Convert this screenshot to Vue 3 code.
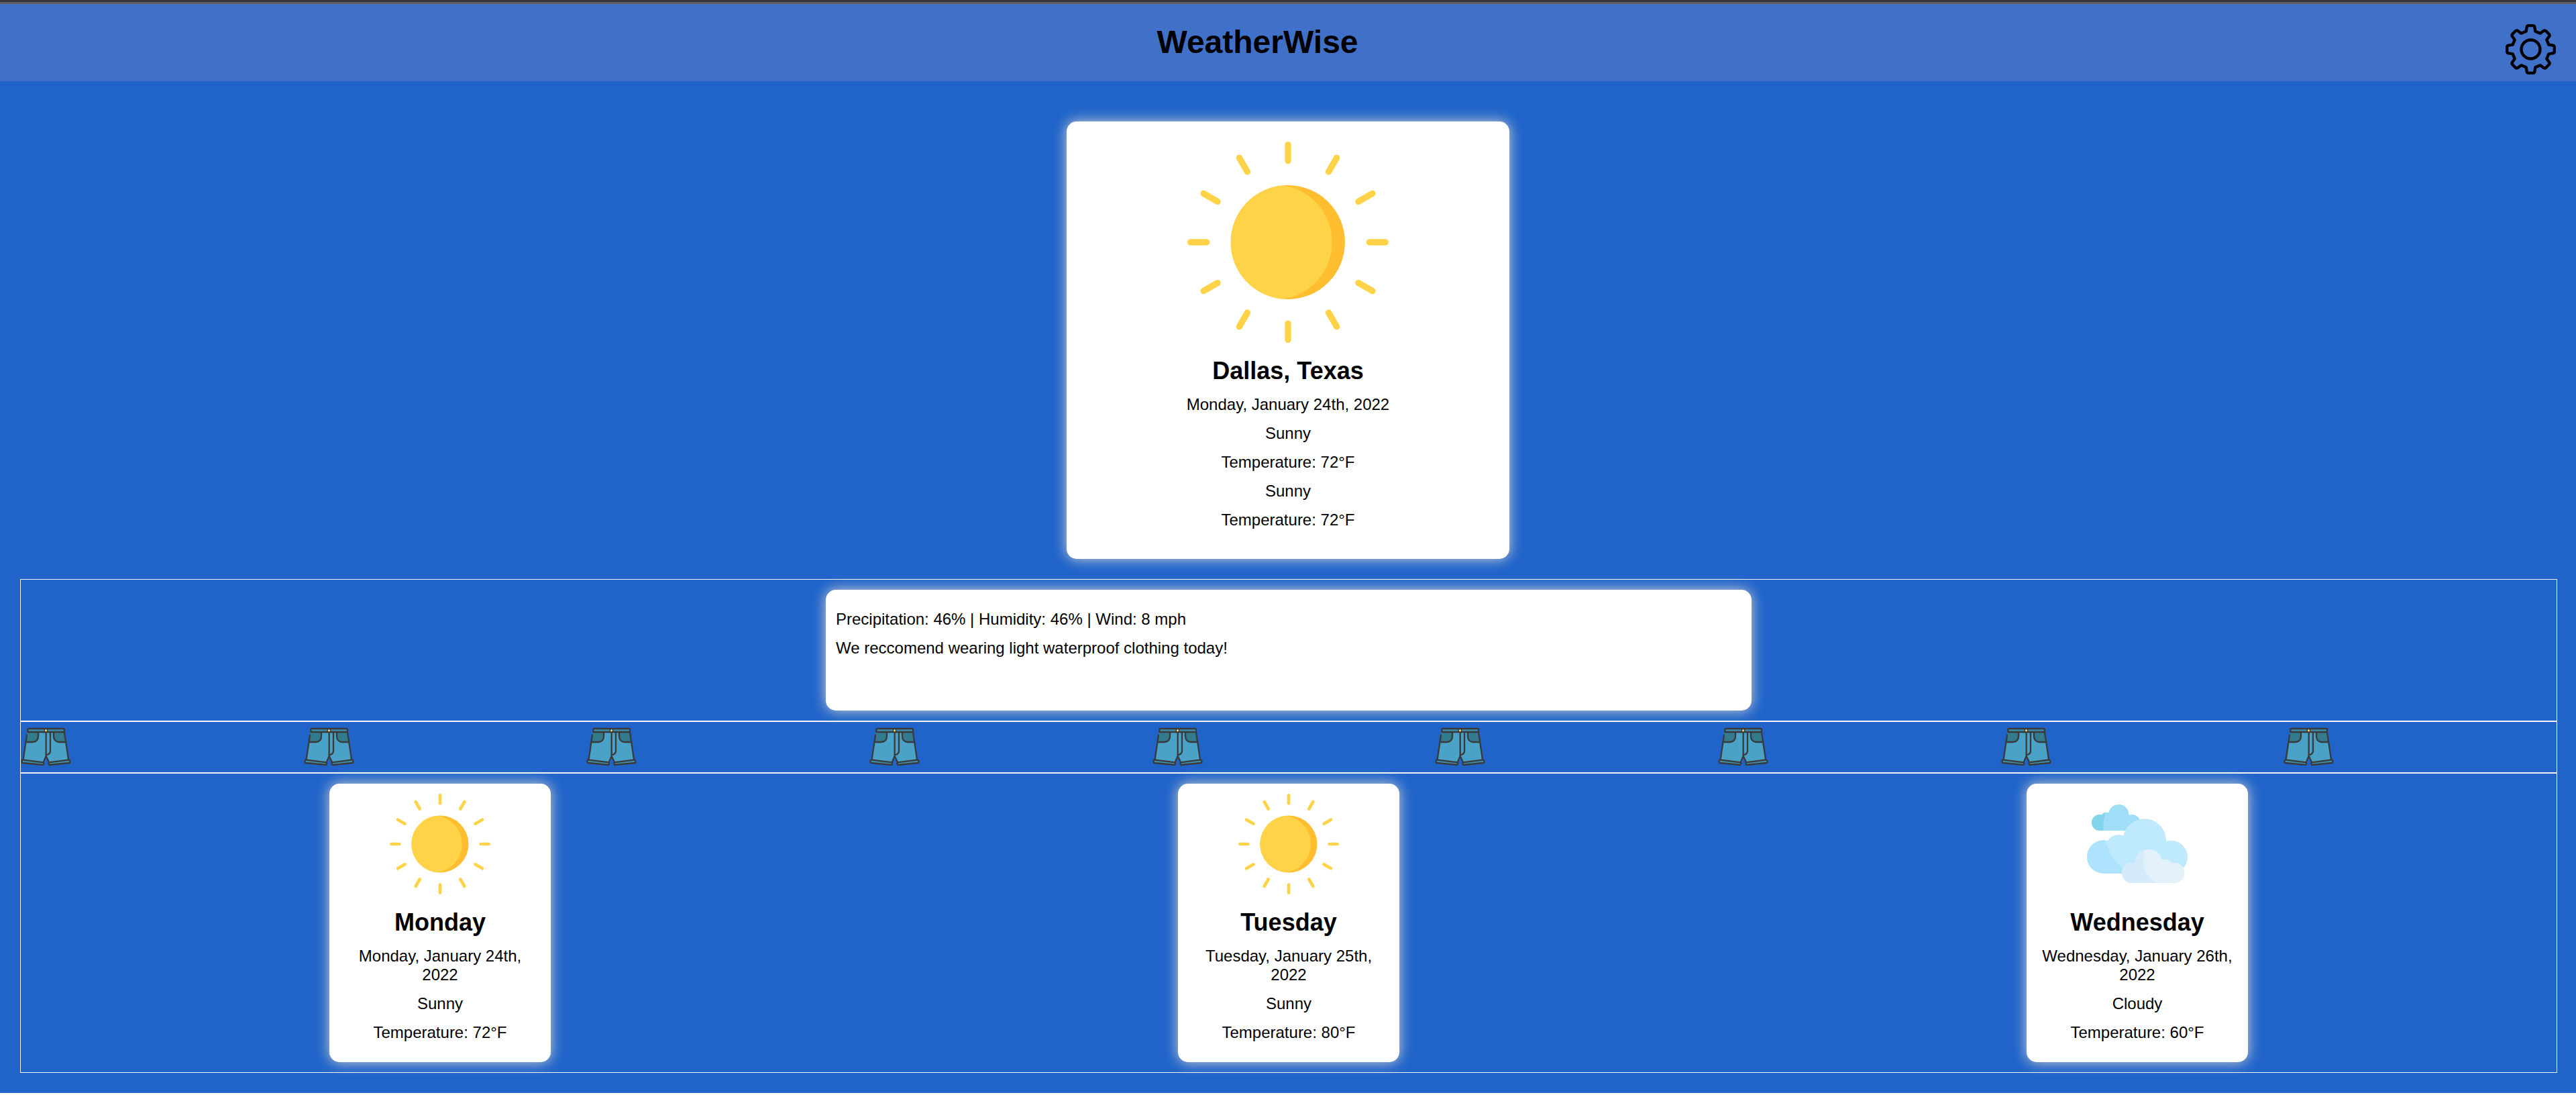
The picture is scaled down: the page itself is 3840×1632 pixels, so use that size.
<script setup>
const today = {
  place: 'Dallas, Texas',
  date: 'Monday, January 24th, 2022',
  readings: ['Sunny', 'Temperature: 72°F', 'Sunny', 'Temperature: 72°F'],
}

const details = [
  'Precipitation: 46% | Humidity: 46% | Wind: 8 mph',
  'We reccomend wearing light waterproof clothing today!',
]

const forecast = [
  { day: 'Monday', date: 'Monday, January 24th, 2022', sky: 'Sunny', temp: 72 },
  { day: 'Tuesday', date: 'Tuesday, January 25th, 2022', sky: 'Sunny', temp: 80 },
  { day: 'Wednesday', date: 'Wednesday, January 26th, 2022', sky: 'Cloudy', temp: 60 },
]
</script>

<template>
  <svg class="defs" width="0" height="0" aria-hidden="true">
    <symbol id="sun" viewBox="0 0 512 512">
      <g stroke="#ffd347" stroke-width="16" stroke-linecap="round">
        <path
          v-for="n in 12"
          :key="n"
          d="M256 8V49"
          :transform="`rotate(${n * 30} 256 256)`"
        />
      </g>
      <circle cx="256" cy="256" r="145" fill="#ffbd30" />
      <path d="M243 111.500A145 145 0 0 0 243 400.500A146 146 0 0 0 243 111.500Z" fill="#ffd347" />
    </symbol>

    <clipPath id="back-cloud">
      <circle cx="57" cy="129" r="36" />
      <circle cx="87" cy="107" r="24" />
      <circle cx="142" cy="94" r="46" />
      <circle cx="202" cy="129" r="36" />
      <rect x="57" y="100" width="145" height="65" />
    </clipPath>
    <clipPath id="big-cloud">
      <circle cx="74" cy="282" r="74" />
      <circle cx="141" cy="241" r="57" />
      <circle cx="257" cy="209" r="97" />
      <circle cx="376" cy="283" r="74" />
      <rect x="74" y="250" width="302" height="106" />
    </clipPath>
    <clipPath id="front-cloud">
      <circle cx="202" cy="354" r="46" />
      <circle cx="276" cy="309" r="61" />
      <circle cx="348" cy="332" r="38" />
      <circle cx="391" cy="354" r="46" />
      <rect x="202" y="330" width="189" height="70" />
    </clipPath>
    <symbol id="clouds" viewBox="0 0 450 450">
      <g clip-path="url(#back-cloud)">
        <path d="M0 0H450V450H0Z" fill="#9fdef6" />
        <path d="M0 70H88Q72 110 72 170H0Z" fill="#84d4ec" />
      </g>
      <g clip-path="url(#big-cloud)">
        <path d="M0 0H450V450H0Z" fill="#bfe9fc" />
        <path d="M0 200H80C92 255 120 305 190 360H0Z" fill="#aee3ff" />
      </g>
      <g clip-path="url(#front-cloud)">
        <path d="M0 0H450V450H0Z" fill="#e3f2fa" />
        <path d="M150 240H264C236 305 260 375 318 402H150Z" fill="#d6ebfa" />
      </g>
    </symbol>

    <symbol id="shorts" viewBox="0 0 225 225">
      <path d="M30 45H193L213 172L126 183L113 152L99 183L10 172Z" fill="#4aa3c7" />
      <path d="M28 45H78V68Q76 89 57 90H23Z" fill="#327a8c" />
      <path d="M147 45H195L202 90H168Q148 88 147 68Z" fill="#327a8c" />
      <g stroke="#3a3a3c" stroke-width="7" stroke-linejoin="round" stroke-linecap="round">
        <path d="M34 30H191Q195 30 195 34V45H31V33Q31 30 34 30Z" fill="#3d8fa8" />
        <path d="M8 169L102 181Q103 191 99 192L6 183Q2 176 8 169Z" fill="#3d8fa8" />
        <path d="M216 169L125 181Q123 191 128 192L219 183Q223 176 216 169Z" fill="#3d8fa8" />
        <g fill="none">
          <path d="M27 59L11 167" />
          <path d="M195 47L213 167" />
          <path d="M27 90H54Q78 88 78 64V48" />
          <path d="M147 48V66Q149 88 170 90H200" />
          <path d="M113 48V152L102 178M113 152L125 178" />
          <path d="M132 48V132Q130 143 117 147" />
        </g>
      </g>
      <path d="M104 29H121V47H104Z" fill="#3a3a3c" />
      <path d="M112.500 32L118 38L112.500 44L107 38Z" fill="#ffe17a" />
    </symbol>
  </svg>

  <div class="page">
    <header class="topbar">
      <h1>WeatherWise</h1>
      <button type="button" class="settings" aria-label="Settings">
        <svg viewBox="0 0 225 225" fill="none" stroke="#000" stroke-width="13" stroke-linejoin="round">
          <circle cx="112.500" cy="112.500" r="42" />
          <path
            v-for="n in 4"
            :key="n"
            d="M112 6.500H122Q129 6.500 130 13L133 32L155 41L170 30Q176 26 181 31L194 44Q199 49 195 55L184 70L193 92L212 95Q218.500 96 218.500 103V113"
            :transform="`rotate(${n * 90} 112.5 112.5)`"
          />
        </svg>
      </button>
    </header>

    <main>
      <section class="card today">
        <svg class="icon"><use href="#sun" /></svg>
        <h2>{{ today.place }}</h2>
        <p>{{ today.date }}</p>
        <p v-for="(line, i) in today.readings" :key="i">{{ line }}</p>
      </section>

      <div class="panels">
        <section class="row">
          <div class="card details">
            <p v-for="line in details" :key="line">{{ line }}</p>
          </div>
        </section>

        <section class="row clothing">
          <svg v-for="n in 9" :key="n"><use href="#shorts" /></svg>
        </section>

        <section class="row forecast">
          <article v-for="f in forecast" :key="f.day" class="card day">
            <svg class="icon"><use :href="f.sky === 'Cloudy' ? '#clouds' : '#sun'" /></svg>
            <h2>{{ f.day }}</h2>
            <p>{{ f.date }}</p>
            <p>{{ f.sky }}</p>
            <p>Temperature: {{ f.temp }}°F</p>
          </article>
        </section>
      </div>
    </main>
  </div>
</template>

<style>
body {
  margin: 0;
  background: #fff;
}
</style>

<style scoped>
.defs {
  position: absolute;
}

.page {
  border-top: 3px solid #35363a;
  background: #2064c9;
  color: #000;
  font-family: Arial, "Liberation Sans", sans-serif;
  font-size: 24px;
  line-height: 28px;
}

.topbar {
  display: flex;
  align-items: flex-start;
  padding: 30px 30px 10px 14px;
  border-top: 3px solid #5f6164;
  background: #4170c8;
}

h1 {
  flex: 1;
  margin: 0;
  font-size: 48px;
  line-height: 54px;
  text-align: center;
}

.settings {
  width: 75px;
  height: 75px;
  padding: 0;
  border: 0;
  background: none;
  cursor: pointer;
}

.settings svg {
  display: block;
  width: 100%;
  height: 100%;
}

main {
  padding: 60px 30px 30px;
}

.card {
  box-sizing: border-box;
  border-radius: 15px;
  background: #fff;
  box-shadow: 0 0 20px lightgray;
}

h2 {
  margin: 20px 0 15px;
  font-size: 36px;
  line-height: 43px;
}

p {
  margin: 0 0 15px;
}

.icon {
  display: block;
  margin: 0 auto;
}

.today {
  width: 660px;
  margin: 0 auto 30px;
  padding: 30px 30px 29px;
  text-align: center;
}

.today .icon {
  width: 300px;
  height: 300px;
}

/* The side borders hang outside the content width. */
.panels {
  margin-right: -2px;
}

.row {
  border: 1px solid whitesmoke;
  padding: 15px 0;
}

.details {
  width: 1380px;
  min-height: 180px;
  margin: 0 auto;
  padding: 30px 15px 15px;
}

.clothing {
  display: grid;
  grid-template-columns: repeat(9, 1fr);
  gap: 15px;
  padding: 0;
}

.clothing svg {
  display: block;
  width: 75px;
  height: 75px;
}

.forecast {
  display: grid;
  grid-template-columns: repeat(3, 1fr);
  gap: 15px;
  justify-items: center;
}

.day {
  width: 330px;
  padding: 15px;
  text-align: center;
}

.day .icon {
  width: 150px;
  height: 150px;
}
</style>
